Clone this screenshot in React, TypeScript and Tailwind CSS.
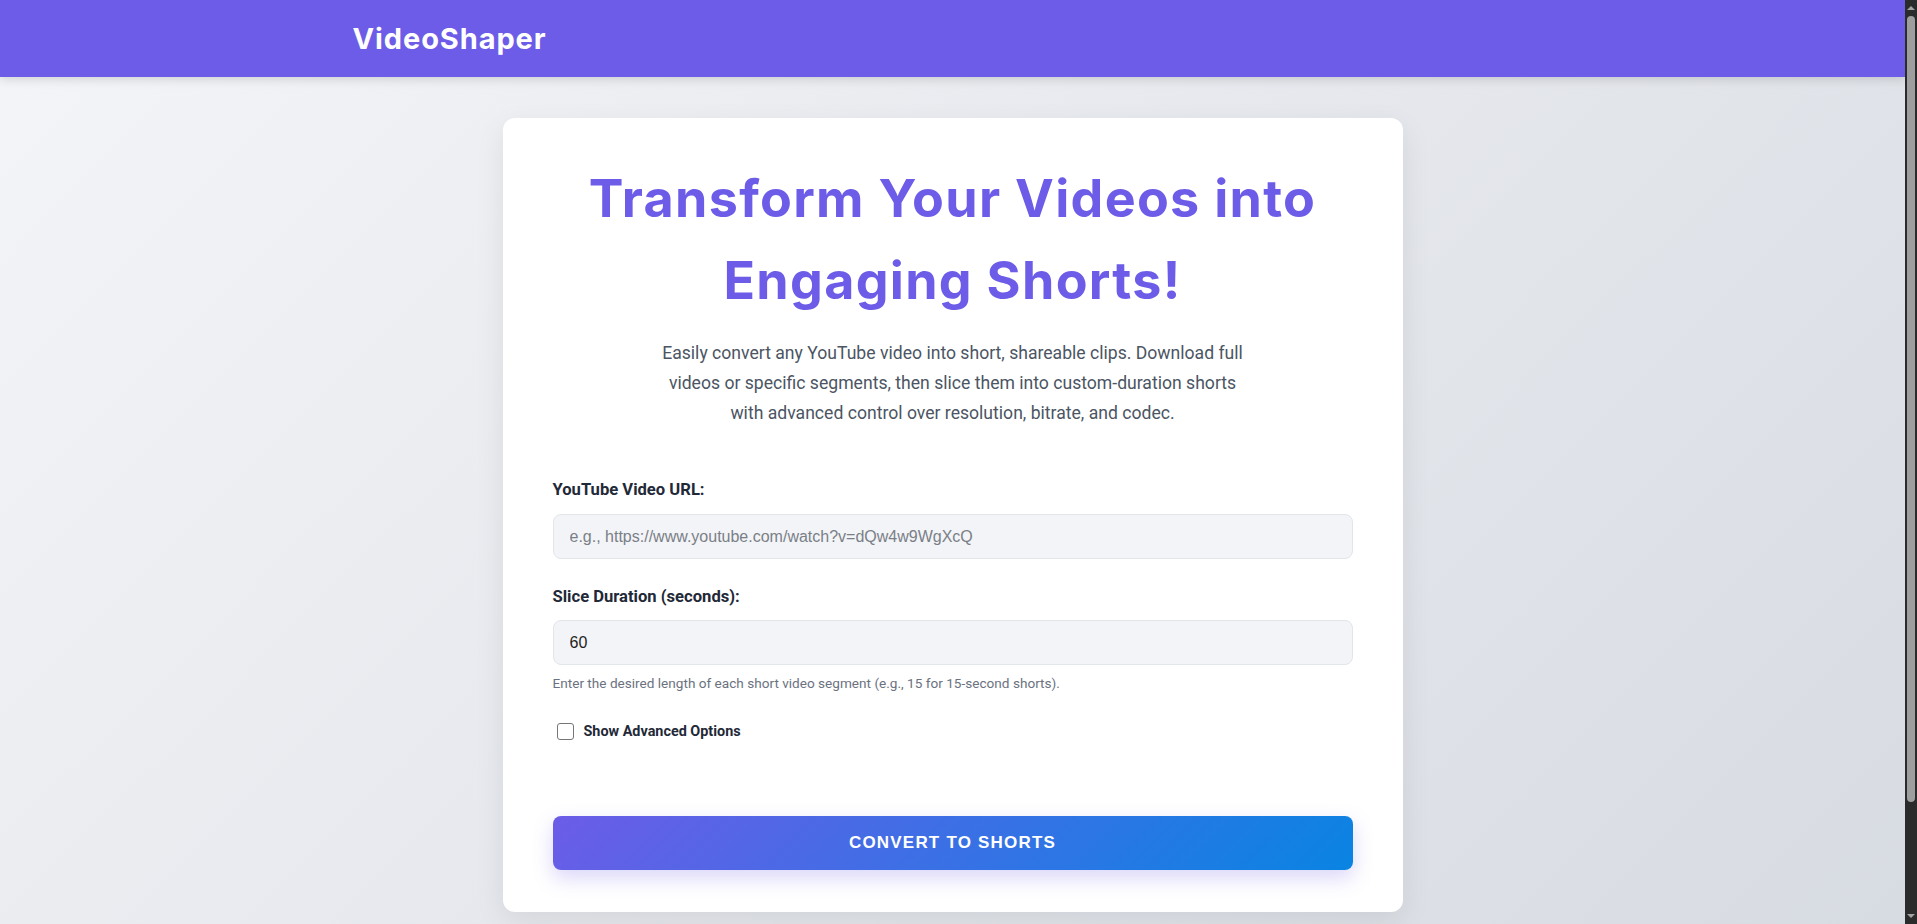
import React from "react";

function FakeScrollbar() {
  return (
    <div className="fixed right-0 top-0 z-50 flex h-screen w-[12px] flex-col items-center bg-[#2b2b2b]">
      <div className="flex h-[16px] w-full items-center justify-center">
        <span className="block h-0 w-0 border-x-[4px] border-b-[4px] border-x-transparent border-b-[#a3a3a3]" />
      </div>
      <div className="w-full flex-1 px-[2px]">
        <div className="h-[786px] w-full rounded-full bg-[#9e9e9e]" />
      </div>
      <div className="flex h-[16px] w-full items-center justify-center">
        <span className="block h-0 w-0 border-x-[4px] border-t-[4px] border-x-transparent border-t-[#a3a3a3]" />
      </div>
    </div>
  );
}

export default function App() {
  return (
    <div className="min-h-[1046px] w-[calc(100%-12px)] bg-[linear-gradient(135deg,#f4f5f8_0%,#d6dae1_100%)] font-['Roboto',sans-serif]">
      <FakeScrollbar />
      <header className="h-[77px] bg-[#6c5ce7] shadow-[0_2px_10px_rgba(0,0,0,0.15)]">
        <div className="mx-auto flex h-full max-w-[1200px] items-center">
          <h1 className="font-['Inter',sans-serif] text-[29px] font-bold tracking-[0.9px] text-white">
            VideoShaper
          </h1>
        </div>
      </header>
      <main className="pt-[41px] pb-[134px]">
        <div className="mx-auto w-[900px] rounded-xl bg-white px-[50px] pt-[40px] pb-[42px] shadow-[0_10px_30px_rgba(0,0,0,0.08)]">
          <h2 className="text-center font-['Inter',sans-serif] text-[52px] font-bold leading-[82px] tracking-[1.3px] text-[#6c5ce7]">
            Transform Your Videos into
            <br />
            Engaging Shorts!
          </h2>
          <p className="mx-auto mt-[16px] max-w-[600px] text-center text-[17.6px] leading-[30px] text-[#4b5563]">
            Easily convert any YouTube video into short, shareable clips. Download full videos or specific segments, then
            slice them into custom-duration shorts with advanced control over resolution, bitrate, and codec.
          </p>
          <form className="mt-[52px]" onSubmit={(e) => e.preventDefault()}>
            <label className="block text-[16.6px] font-bold leading-[20px] text-[#1f2937]">YouTube Video URL:</label>
            <input
              type="text"
              placeholder="e.g., https://www.youtube.com/watch?v=dQw4w9WgXcQ"
              className="mt-[14px] block h-[45px] w-full rounded-lg border border-[#e2e5ea] bg-[#f3f4f7] px-[16px] font-['Liberation_Sans',sans-serif] text-[16px] text-[#1f2937] outline-none placeholder:text-[#7a7f87]"
            />
            <label className="mt-[28px] block text-[16.6px] font-bold leading-[20px] text-[#1f2937]">
              Slice Duration (seconds):
            </label>
            <input
              type="text"
              defaultValue="60"
              className="mt-[13px] block h-[45px] w-full rounded-lg border border-[#e2e5ea] bg-[#f3f4f7] px-[16px] font-['Liberation_Sans',sans-serif] text-[16px] text-[#222] outline-none"
            />
            <p className="mt-[9px] text-[13.6px] leading-[18px] text-[#6b7280]">
              Enter the desired length of each short video segment (e.g., 15 for 15-second shorts).
            </p>
            <div className="mt-[29px] flex items-center gap-[10px] pl-[4px]">
              <span className="block h-[17px] w-[17px] rounded-[3px] border border-[#767676] bg-white" />
              <span className="text-[14.4px] font-bold text-[#1f2937]">Show Advanced Options</span>
            </div>
            <button
              type="submit"
              className="mt-[73px] flex h-[54px] w-full items-center justify-center rounded-lg bg-[linear-gradient(135deg,#6c5ce7_0%,#0984e3_100%)] font-['Liberation_Sans',sans-serif] text-[17px] font-bold uppercase tracking-[1.2px] text-white shadow-[0_8px_20px_rgba(108,92,231,0.25)]"
            >
              Convert to Shorts
            </button>
          </form>
        </div>
      </main>
    </div>
  );
}
